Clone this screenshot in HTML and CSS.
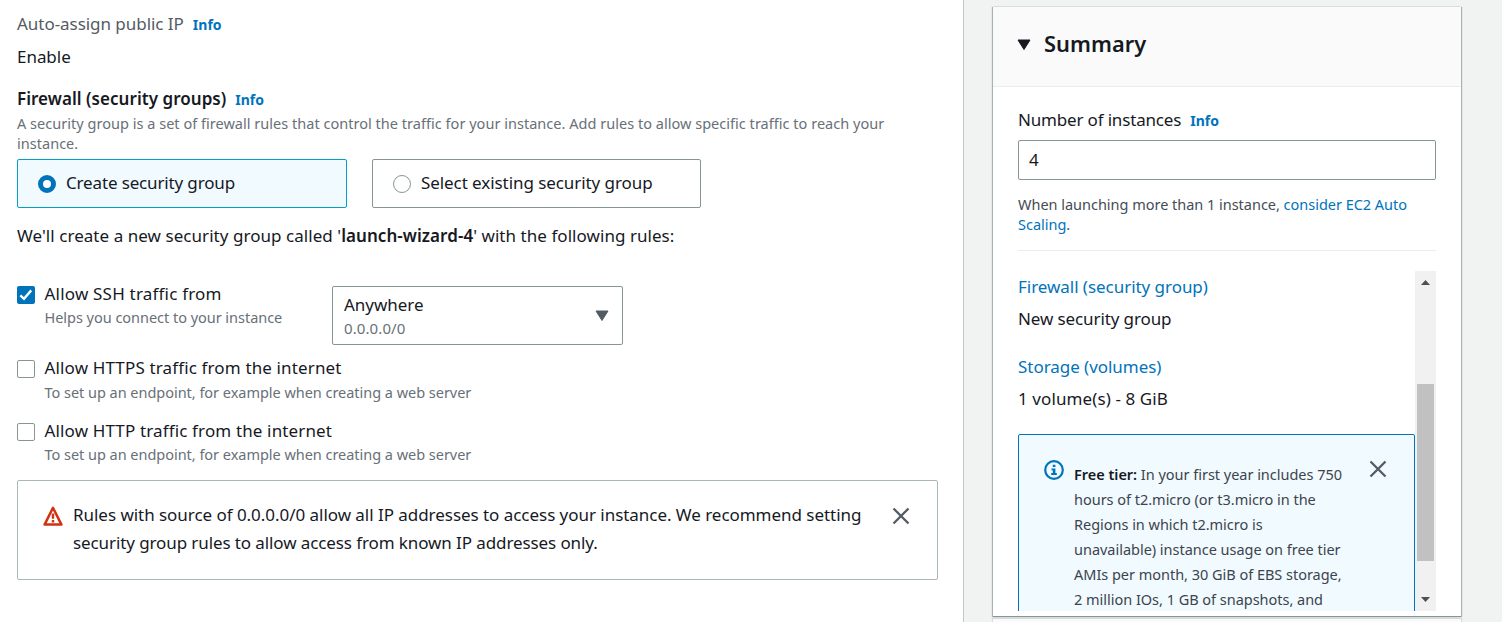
FILE: index.html
```
<!DOCTYPE html>
<html lang="en">
<head>
<meta charset="utf-8">
<title>Launch an instance</title>
<link rel="stylesheet" href="styles.css">
</head>
<body>
<main class="page">
  <section class="network">
    <div class="line muted-label"><span class="t-auto">Auto-assign public IP</span><a class="info">Info</a></div>
    <div class="line enable">Enable</div>
    <div class="line firewall"><b class="t-fire">Firewall (security groups)</b><a class="info">Info</a></div>
    <p class="desc">A security group is a set of firewall rules that control the traffic for your instance. Add rules to allow specific traffic to reach your<br>instance.</p>
    <div class="options">
      <label class="option selected"><i class="radio on"></i><span class="t-create">Create security group</span></label>
      <label class="option"><i class="radio"></i><span class="t-select">Select existing security group</span></label>
    </div>
    <p class="line called">We'll create a new security group called '<b>launch-wizard-4</b>' with the following rules:</p>
    <div class="ssh">
      <div class="rule">
        <svg class="check" viewBox="0 0 18 18"><rect width="18" height="18" rx="2" fill="#0073bb"/><path d="M3.3 9.3 7 12.8 14.2 4.4" fill="none" stroke="#fff" stroke-width="2.4"/></svg>
        <div><div class="label t-ssh">Allow SSH traffic from</div><div class="help t-helps">Helps you connect to your instance</div></div>
      </div>
      <div class="dropdown">
        <div><div class="value">Anywhere</div><div class="cidr">0.0.0.0/0</div></div>
        <svg class="caret" viewBox="0 0 14 12"><path d="M1 1H13L7 10.5Z" fill="#545b64" stroke="#545b64" stroke-linejoin="round"/></svg>
      </div>
    </div>
    <div class="rule https"><i class="check box"></i><div><div class="label t-https">Allow HTTPS traffic from the internet</div><div class="help">To set up an endpoint, for example when creating a web server</div></div></div>
    <div class="rule http"><i class="check box"></i><div><div class="label t-http">Allow HTTP traffic from the internet</div><div class="help">To set up an endpoint, for example when creating a web server</div></div></div>
    <div class="alert">
      <svg class="warn" viewBox="0 0 20 20"><path d="M10 1.8 18.4 18.6H1.6Z" fill="none" stroke="#d13212" stroke-width="2.5" stroke-linejoin="round"/><path d="M10 7.5V12.8M10 14V16.4" stroke="#d13212" stroke-width="2.4"/></svg>
      <p class="alert-text"><span class="t-a1">Rules with source of 0.0.0.0/0 allow all IP addresses to access your instance. We recommend setting</span><br><span class="t-a2">security group rules to allow access from known IP addresses only.</span></p>
      <svg class="close" viewBox="0 0 18 18"><path d="M1.5 1.5 16.5 16.5M16.5 1.5 1.5 16.5" stroke="#545b64" stroke-width="2.3"/></svg>
    </div>
  </section>
  <aside class="side">
    <section class="card">
      <header class="head"><svg class="caret" viewBox="0 0 14 12"><path d="M1 1H13L7 10.5Z" fill="#16191f" stroke="#16191f" stroke-linejoin="round"/></svg><h2>Summary</h2></header>
      <div class="body">
        <div class="line count"><span class="t-num">Number of instances</span><a class="info">Info</a></div>
        <div class="input">4</div>
        <p class="hint"><span class="t-when">When launching more than 1 instance, <a>consider EC2 Auto</a></span><br><a>Scaling</a>.</p>
        <div class="scroller">
          <div class="content">
            <a class="line t-fw">Firewall (security group)</a>
            <div class="line item t-new">New security group</div>
            <a class="line storage t-st">Storage (volumes)</a>
            <div class="line item t-vol">1 volume(s) - 8 GiB</div>
            <div class="tier">
              <svg class="tinfo" viewBox="0 0 20 20"><circle cx="10" cy="10" r="8.8" fill="none" stroke="#0073bb" stroke-width="2.2"/><path d="M8.8 4.8H11.4V7.1H8.8ZM7.5 8.4H11.4V13H12.8V15H7.2V13H8.8V10.2H7.5Z" fill="#0073bb"/></svg>
              <p class="tier-text"><b>Free tier:</b> In your first year includes 750<br>hours of t2.micro (or t3.micro in the<br>Regions in which t2.micro is<br>unavailable) instance usage on free tier<br>AMIs per month, 30 GiB of EBS storage,<br>2 million IOs, 1 GB of snapshots, and</p>
              <svg class="close" viewBox="0 0 18 18"><path d="M1.5 1.5 16.5 16.5M16.5 1.5 1.5 16.5" stroke="#545b64" stroke-width="2.3"/></svg>
            </div>
          </div>
          <div class="track">
            <svg class="arrow" viewBox="0 0 9 5"><path d="M4.5 0 9 5H0Z" fill="#505050"/></svg>
            <div class="thumb"></div>
            <svg class="arrow" viewBox="0 0 9 5"><path d="M0 0H9L4.5 5Z" fill="#505050"/></svg>
          </div>
        </div>
      </div>
    </section>
    <div class="footer"></div>
  </aside>
</main>
</body>
</html>
```
FILE: styles.css
```
* { box-sizing: border-box; }
body { margin: 0; font-family: "Noto Sans", sans-serif; font-size: 17px; letter-spacing: -0.04px; color: #16191f; background: #f1f3f3; overflow: hidden; }
p, h2 { margin: 0; }
b { font-weight: 600; }
a { color: #0073bb; }
svg { display: block; flex: none; }
.page { display: flex; width: 1502px; height: 622px; white-space: nowrap; }
.network { width: 964px; height: 622px; background: #fff; border-right: 1px solid #bfc7c8; padding: 10px 25px 0 17px; }
.line { display: block; height: 28px; line-height: 28px; }
.info { font-size: 14px; font-weight: 700; margin-left: 9px; letter-spacing: 0; }
.muted-label { color: #545b64; }
.t-fire { letter-spacing: 0.04px; }
.enable { margin-top: 5px; }
.firewall { margin-top: 14px; }
.desc { font-size: 14.5px; line-height: 20px; color: #687078; letter-spacing: 0.025px; }
.options { display: flex; gap: 25px; margin-top: 6px; }
.option { display: flex; align-items: center; width: 330px; height: 49px; border: 1px solid #879596; border-radius: 2px; padding-left: 20px; gap: 10px; }
.option span { padding-bottom: 2px; }
.option + .option { width: 329px; }
.selected { background: #f1faff; border-color: #00a1c9; }
.radio { width: 18px; height: 18px; border: 1px solid #879596; border-radius: 50%; background: #fff; }
.radio.on { border: 5.5px solid #0073bb; }
.t-create { letter-spacing: -0.15px; }
.t-select { letter-spacing: -0.07px; }
.called { margin-top: 14px; letter-spacing: 0.05px; }
.ssh { display: flex; height: 59px; margin-top: 36px; }
.ssh .rule { width: 315px; margin-top: -6px; }
.rule { display: flex; gap: 9.5px; }
.check { width: 18px; height: 18px; margin-top: 6px; flex: none; }
.box { border: 1px solid #879596; border-radius: 2px; background: #fff; }
.label { height: 28px; line-height: 28px; letter-spacing: 0.14px; }
.t-ssh { letter-spacing: 0.2px; }
.help { font-size: 14.5px; line-height: 20px; margin-top: -1px; color: #687078; letter-spacing: -0.03px; }
.dropdown { display: flex; align-items: center; justify-content: space-between; width: 291px; height: 59px; border: 1px solid #879596; border-radius: 2px; padding: 0 13px 0 11px; }
.value { line-height: 26px; }
.cidr { font-size: 15px; line-height: 22px; margin-top: -1px; color: #687078; letter-spacing: 0.1px; }
.caret { width: 14px; height: 12px; }
.https { height: 63px; margin-top: 9px; }
.https .help { padding-top: 1px; }
.http { height: 63px; }
.alert { display: flex; width: 921px; height: 100px; border: 1px solid #aab7b8; border-radius: 2px; padding: 20px 27px 0 25px; }
.warn { width: 20px; height: 20px; margin: 5px 10px 0 0; }
.alert-text { line-height: 28px; flex: 1; }
.t-a2 { letter-spacing: -0.1px; }
.close { width: 18px; height: 18px; margin-top: 6px; }
.side { padding: 7px 0 0 29px; width: 498px; }
.card { width: 468px; height: 610px; background: #fff; border-bottom: 1px solid #879596; box-shadow: 1px 0 1px 0 rgba(0,28,36,.3), -1px 0 1px 0 rgba(0,28,36,.3); }
.head { display: flex; align-items: center; gap: 13px; height: 80px; background: #fafafa; border-bottom: 1px solid #eaeded; padding: 0 0 4px 24px; }
h2 { font-size: 21.8px; line-height: 28px; font-weight: 600; letter-spacing: 0.05px; padding-bottom: 2px; }
.body { padding: 19px 25px 0; }
.t-num { letter-spacing: -0.17px; }
.input { height: 40px; margin-top: 6px; border: 1px solid #879596; border-radius: 2px; line-height: 38px; padding-left: 10px; }
.hint { font-size: 14.5px; line-height: 20px; margin-top: 14px; height: 57px; color: #444c55; letter-spacing: -0.02px; border-bottom: 1px solid #eaeded; }
.scroller { display: flex; height: 340px; margin-top: 20px; overflow: hidden; }
.content { width: 397px; padding-top: 2px; }
.t-new { letter-spacing: -0.11px; }
.t-vol { letter-spacing: 0.1px; }
.item { margin-top: 4px; }
.storage { margin-top: 20px; }
.tier { display: flex; height: 260px; margin-top: 21px; background: #f1faff; border: 1px solid #0073bb; border-radius: 2px; padding: 25px 27px 0 25px; }
.tinfo { width: 20px; height: 20px; margin-right: 10px; }
.tier-text { flex: 1; font-size: 14.5px; line-height: 25px; margin-top: 2px; color: #3c444d; letter-spacing: -0.02px; }
.tier-text b { color: #16191f; }
.tier .close { margin-top: 0; }
.track { width: 21px; height: 340px; background: #f1f1f1; display: flex; flex-direction: column; align-items: center; padding: 9px 0; }
.arrow { width: 9px; height: 5px; }
.thumb { width: 17px; height: 177px; margin: 99px 0 36px; background: #c1c1c1; }
.footer { width: 468px; height: 10px; margin-top: 2px; background: #fafafa; box-shadow: 0 0 1px 1px #d5dbdb; }
```
